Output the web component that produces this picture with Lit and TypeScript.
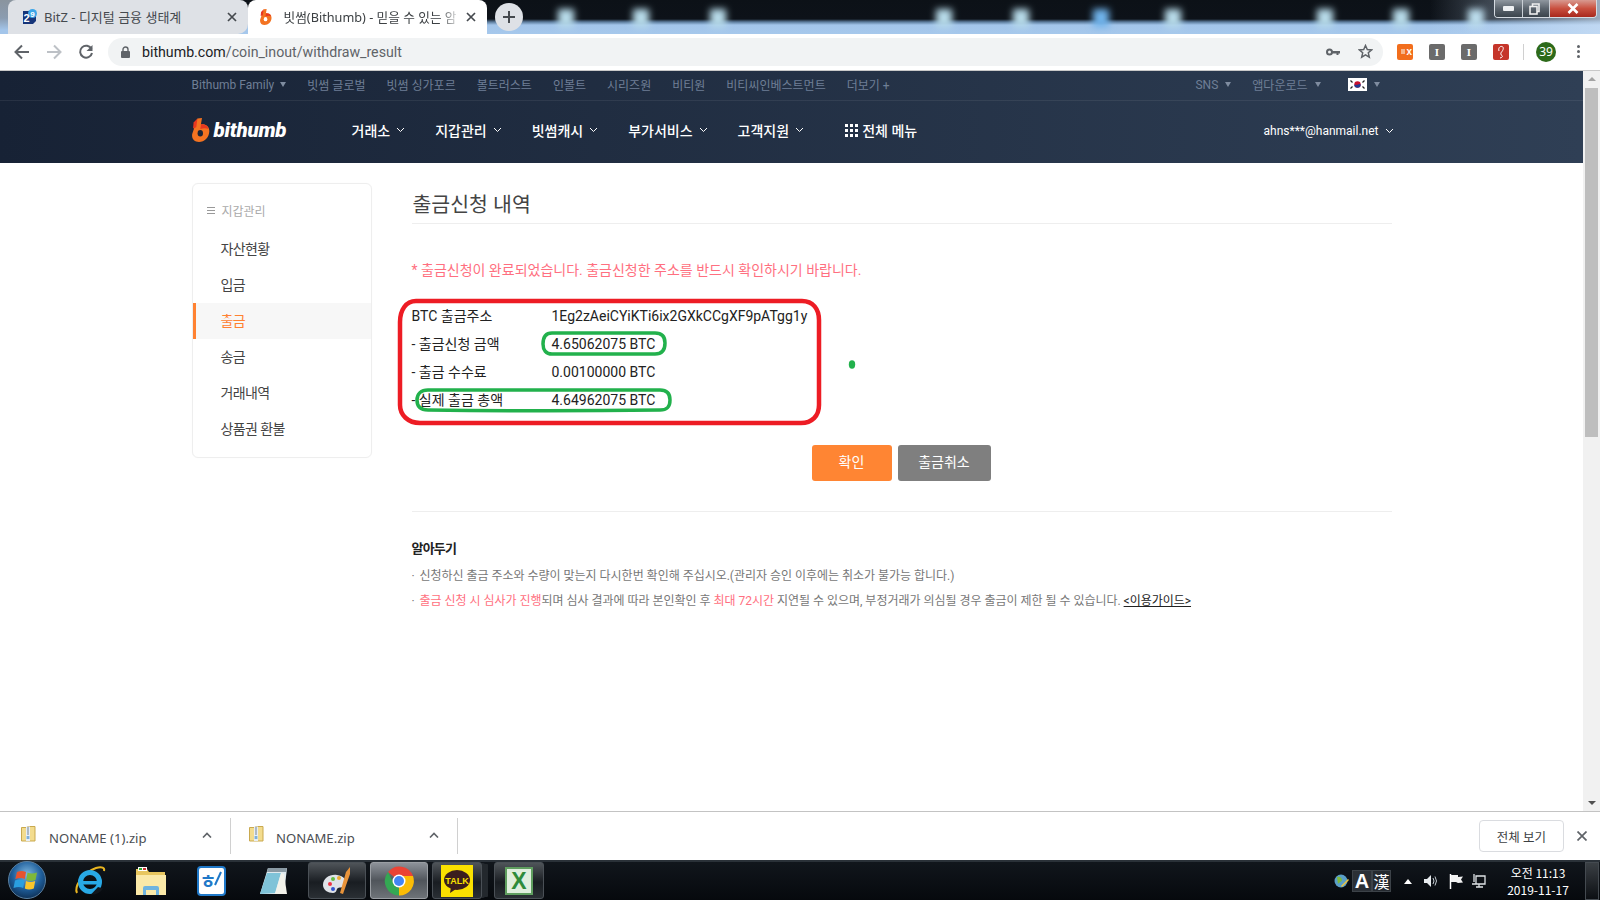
import { LitElement, html, svg, css } from "lit";
import { customElement } from "lit/decorators.js";

const chevron = html`<svg class="chev" width="9" height="6" viewBox="0 0 9 6"><path d="M1 1l3.5 3.5L8 1" fill="none" stroke="currentColor" stroke-width="1"/></svg>`;
const tri = html`<span class="tri"></span>`;

const flame = (w: number, h: number, hole: string) => html`<svg width=${w} height=${h} viewBox="0 0 18 24">
  <path d="M5.4 0.4 L10 0 L8.9 6.4 C13.5 5.8 17.6 8.2 17.3 13.6 C17 19.8 12.5 24 7 24 C2.4 24 -0.6 21 0.2 16 Z" fill="#f37321"/>
  <path d="M5.4 0.4L1.6 4.5 1 10.5 4.3 9.2Z" fill="#e8381f"/>
  <path d="M9 6.4C13 6 15.6 8 16.6 11 13.5 9.6 11 10.2 8.3 11Z" fill="#e8381f"/>
  <ellipse cx="8.3" cy="15.2" rx="2.7" ry="3.3" fill=${hole}/>
</svg>`;

const zipIcon = html`<svg class="zip" width="15" height="17" viewBox="0 0 15 17">
  <path d="M0.5 2.5h5l1-1h7.5v14.5h-13.5z" fill="#f3dc8e" stroke="#c9a94f"/>
  <path d="M5 1.5h4v14.5h-4z" fill="#e7eef5"/>
  <path d="M6.2 3h1.6M6.2 5h1.6M6.2 7h1.6M6.2 9h1.6" stroke="#5a6a7a"/>
  <rect x="5.6" y="11" width="2.8" height="3" fill="#7fb0d8"/>
</svg>`;

const upIcon = html`<svg class="up" width="10" height="6" viewBox="0 0 10 6"><path d="M1 5.500L5 1.500l4 4" fill="none" stroke="#5f6368" stroke-width="1.600"/></svg>`;

const topLinks = ["빗썸 글로벌", "빗썸 싱가포르", "볼트러스트", "인볼트", "시리즈원", "비티원", "비티씨인베스트먼트"];
const mainLinks = ["거래소", "지갑관리", "빗썸캐시", "부가서비스", "고객지원"];
const sideItems = ["자산현황", "입금", "출금", "송금", "거래내역", "상품권 환불"];
const rows = [
  ["BTC 출금주소", "1Eg2zAeiCYiKTi6ix2GXkCCgXF9pATgg1y"],
  ["- 출금신청 금액", "4.65062075 BTC"],
  ["- 출금 수수료", "0.00100000 BTC"],
  ["- 실제 출금 총액", "4.64962075 BTC"],
];
const spots = [566, 641, 718, 944, 1021, 1101, 1173, 1325, 1401, 1476];

@customElement("app-root")
export class AppRoot extends LitElement {
  static styles = css`
    :host { display: block; width: 1600px; height: 900px; position: relative; overflow: hidden; background: #fff; font-family: Roboto, "Noto Sans CJK KR", sans-serif; color: #222; }
    * { box-sizing: border-box; }
    .shell { display: flex; flex-direction: column; height: 900px; }
    a { color: inherit; text-decoration: none; }

    .titlebar { position: relative; height: 34px; flex: none; display: flex; align-items: flex-end; padding-left: 8px; overflow: hidden;
      background: linear-gradient(180deg, #0c1117 0, #0d1219 19px, #5d7d9e 22px, #a3c5ea 25px, #a6c8ec 34px); }
    .wall { position: absolute; inset: 0; }
    .leftfade { position: absolute; left: 0; top: 0; width: 70px; height: 34px; background: linear-gradient(180deg, #8a949e 0, #8b9cb0 18px, #a3c5ea 30px); }
    .rightfade { position: absolute; right: 0; top: 0; width: 170px; height: 34px; background: linear-gradient(90deg, transparent, #c9def5); opacity: .75; }
    .tab { position: relative; width: 239.5px; height: 34px; border-radius: 8px 8px 0 0; display: flex; align-items: center; font: 13px "Noto Sans", "Noto Sans CJK KR", sans-serif; color: #3c4043; padding: 0 0 1px 13px; }
    .tab.off { background: #dee1e6; color: #45494e; border-radius: 8px 8px 10px 0; }
    .tab.on { background: #fff; color: #3c4043; padding-left: 10px; font-size: 12.7px; }
    .tab .fav { width: 16px; height: 16px; flex: none; display: flex; justify-content: center; align-items: center; }
    .tab .tt { margin-left: 7px; white-space: nowrap; overflow: hidden; flex: none; }
    .tab.on .tt { margin-left: 10px; width: 177px; -webkit-mask-image: linear-gradient(90deg, #000 88%, transparent); mask-image: linear-gradient(90deg, #000 88%, transparent); }
    .tab .x { flex: none; width: 10px; height: 10px; margin-left: 5px; }
    .tab.off .tt { width: 150px; }
    .tab.off .x { margin-left: 33px; }
    .plus { position: relative; width: 28px; height: 28px; border-radius: 50%; background: #dee1e6; margin: 0 0 3px 8px; display: flex; align-items: center; justify-content: center; }
    .winbtns { position: absolute; right: 3px; top: 0; width: 103px; height: 18px; display: flex; border: 1px solid #d5dbe2; border-top: none; border-radius: 0 0 4px 4px; overflow: hidden; }
    .winbtns div { display: flex; align-items: center; justify-content: center; background: linear-gradient(180deg, #8f979f, #5b646d 50%, #3b444c); border-right: 1px solid #c9cfd5; }
    .winbtns .mn { width: 28px; } .winbtns .mx { width: 27px; padding-right: 3px; }
    .winbtns .cl { flex: 1; background: linear-gradient(180deg, #d89a90, #c9503f 50%, #a8281c); border-right: none; }

    .toolbar { height: 37px; flex: none; background: #fff; display: flex; align-items: center; border-bottom: 1px solid #c9c9c9; padding: 0 0 1px 14px; }
    .navico { width: 16px; height: 16px; flex: none; margin-right: 16px; display: block; }
    .omni { width: 1275px; margin-left: -2px; height: 28px; border-radius: 14px; background: #f1f3f4; display: flex; align-items: center; padding: 0 0 0 13px; font: 14.2px Roboto, sans-serif; color: #5f6368; }
    .omni b { font-weight: 400; color: #202124; }
    .url { margin-left: 12px; padding-top: 1px; }
    .omni .end { margin-left: auto; display: flex; align-items: center; gap: 18px; padding-right: 10px; }
    .exts { display: flex; align-items: center; margin-left: 14px; }
    .ext { width: 16px; height: 16px; border-radius: 2px; margin-right: 16px; display: flex; align-items: center; justify-content: center; color: #fff; font: 700 11px "Liberation Serif", serif; }
    .ext.o { background: #f26e1d; font: 700 10px "Liberation Sans", sans-serif; justify-content: flex-end; padding-right: 1px; gap: 1px; }
    .ext.o i { width: 4px; height: 5px; background: #f7b68a; display: block; }
    .ext.g { background: #6b6b6b; }
    .ext.r { background: #c5352a; }
    .sep { width: 1px; height: 16px; background: #d0d0d0; margin: 0 12px 0 -2px; }
    .avatar { width: 20px; height: 20px; border-radius: 50%; background: #2d6a1a; color: #fff; font: 12px "Noto Sans", sans-serif; display: flex; align-items: center; justify-content: center; }
    .dots { margin-left: 21px; display: flex; flex-direction: column; gap: 2px; }
    .dots i { width: 3px; height: 3px; border-radius: 50%; background: #5f6368; display: block; }

    .view { flex: 1; display: flex; min-height: 0; }
    .page { flex: 1; min-width: 0; }
    .wrap { width: 1200px; margin: 0 auto; }
    header { background: linear-gradient(90deg, #172235, #2f3f55); height: 92px; }
    .top { height: 30px; padding-bottom: 2px; border-bottom: 1px solid rgba(255,255,255,.07); color: #6f7f96; font-size: 12px; }
    .top .wrap, .mainnav .wrap { display: flex; align-items: center; height: 100%; }
    .top .links { display: flex; gap: 21px; align-items: center; }
    .top .fam { display: flex; align-items: center; gap: 6px; }
    .tri { display: inline-block; width: 0; height: 0; border: 3.5px solid transparent; border-top: 5px solid #7f8ca0; border-bottom: 0; }
    .top .right { margin-left: auto; display: flex; align-items: center; padding-right: 12px; }
    .top .right span.lbl { margin-right: 7px; }
    .top .right .s1 { margin-right: 21px; }
    .top .right .s2 { margin-right: 27px; }
    .flag { width: 19px; height: 13px; margin-right: 7px; display: block; }
    .mainnav { height: 62px; padding-bottom: 4px; color: #fff; font-size: 14px; font-weight: 500; }
    .logo { width: 160px; display: flex; align-items: center; gap: 4px; flex: none; }
    .logo span { font: italic 900 20.5px Roboto, sans-serif; letter-spacing: -0.2px; color: #fff; }
    .mlinks { display: flex; align-items: center; gap: 30px; }
    .mlinks a { display: flex; align-items: center; gap: 6px; }
    .chev { display: block; }
    .mlinks .all { gap: 4px; margin-left: 11px; }
    .grid9 { display: grid; grid-template-columns: repeat(3, 3px); gap: 2px; }
    .grid9 i { width: 3px; height: 3px; background: #fff; display: block; }
    .user { margin-left: auto; margin-right: -2px; padding-top: 2px; display: flex; align-items: center; gap: 6px; font-weight: 400; font-size: 12px; }

    .content { display: flex; gap: 40px; padding-top: 20px; }
    .side { width: 180px; height: 275px; flex: none; border: 1px solid #eee; border-radius: 6px; padding-top: 8px; box-shadow: 0 0 1px #f3f3f3; }
    .side .hd { height: 39px; padding-bottom: 3px; display: flex; align-items: center; gap: 7px; padding-left: 14px; font-size: 12px; color: #aaa; }
    .ham { width: 8px; height: 7px; border-top: 1px solid #999; border-bottom: 1px solid #999; position: relative; }
    .ham::after { content: ""; position: absolute; left: 0; right: 0; top: 2px; height: 1px; background: #999; }
    .side a { display: flex; align-items: center; height: 36px; padding: 0 0 2px 25px; font-size: 14px; letter-spacing: -0.6px; color: #444; border-left: 3px solid transparent; }
    .side a.on { background: #f7f7f7; color: #ff8232; border-left-color: #ff8232; }
    .main { width: 980px; flex: none; }
    h2 { margin: 0; height: 41px; padding: 8px 0 0 1px; line-height: 28px; font-size: 20.5px; font-weight: 400; color: #444; border-bottom: 1px solid #eee; }
    .msg { margin: 36px 0 0; font-size: 14px; line-height: 20px; color: #ff6f80; }
    .tbl { margin-top: 22px; display: grid; grid-template-columns: 140px auto; grid-auto-rows: 28px; align-items: center; font-size: 14px; color: #222; justify-content: start; }
    .tbl .k { margin-top: -2px; }
    .btns { margin-top: 31px; display: flex; justify-content: center; gap: 6px; padding-right: 1px; }
    .btn { height: 36px; border-radius: 3px; display: flex; align-items: center; justify-content: center; color: #fff; font-size: 14px; padding-bottom: 5px; }
    .btn.a { width: 80px; background: #ff8533; }
    .btn.b { width: 93px; background: #7f7f7f; }
    .rule { height: 1px; background: #eee; margin-top: 30px; }
    h3 { margin: 27px 0 5px; font-size: 13px; line-height: 20px; font-weight: 700; color: #222; letter-spacing: -0.8px; }
    .note { margin: 0; display: flex; font-size: 12px; line-height: 25px; color: #777; letter-spacing: -0.02px; }
    .note .dot { width: 8px; flex: none; }
    .note em { font-style: normal; color: #ff6f80; }
    .note u { color: #222; }

    .scroll { width: 17px; flex: none; background: #f1f1f1; display: flex; flex-direction: column; align-items: center; padding-top: 6px; }
    .sup { width: 0; height: 0; border: 4px solid transparent; border-bottom: 4px solid #a3a3a3; border-top: 0; }
    .thumb { width: 13px; height: 349px; background: #bebebe; margin-top: 7px; }
    .sdn { width: 0; height: 0; border: 4px solid transparent; border-top: 4px solid #505050; border-bottom: 0; margin-top: auto; margin-bottom: 6px; }

    .dl { height: 49px; flex: none; background: #fff; border-top: 1px solid #c3c3c3; display: flex; align-items: center; font: 13.1px "Noto Sans", "Noto Sans CJK KR", sans-serif; color: #4a4d52; }
    .dlitem { width: 227px; height: 36px; border-right: 1px solid #d0d0d0; display: flex; align-items: center; padding-left: 21px; position: relative; flex: none; }
    .dlitem.first { width: 231px; }
    .dlitem.second { padding-left: 18px; }
    .dlitem .zip { margin-top: -5px; flex: none; }
    .dlitem .nm { margin-left: 13px; flex: 1; padding-top: 3px; }
    .dlitem.second .nm { margin-left: 12px; }
    .dlitem .up { margin-right: 18px; margin-top: -3px; }
    .dlall { margin-left: auto; width: 85px; height: 32px; border: 1px solid #dadce0; border-radius: 4px; display: flex; align-items: center; justify-content: center; font-size: 12.5px; color: #3c4043; }
    .dlx { margin: 0 13px 0 13px; width: 10px; height: 10px; display: block; }

    .task { height: 40px; flex: none; background: linear-gradient(180deg, #11161c 0, #06090d 100%); border-top: 2px solid #2a3138; display: flex; align-items: stretch; position: relative; color: #fff; }
    .orb { width: 54px; display: flex; align-items: center; justify-content: center; margin-top: -2px; }
    .ti { width: 61px; display: flex; align-items: center; justify-content: center; flex: none; }
    .ti.firsti { margin-left: 5px; }
    .ti svg { overflow: visible; }
    .tb { flex: none; margin: 0 2px 1px; height: 37px; border: 1px solid #4a5056; border-radius: 3px; display: flex; align-items: center; justify-content: center; background: linear-gradient(180deg, #4f5459, #191d22 55%, #2a2f34); }
    .tb.act { background: linear-gradient(180deg, #8d9299, #50555b 50%, #6e7378); border-color: #9a9ea3; }
    .tb.w58 { width: 58px; } .tb.w50 { width: 50px; }
    .tb.paint { margin-left: 4.500px; }
    .tb.kakao { box-shadow: 4px 0 0 -1px #23282d, 8px 0 0 -2px #23282d; }
    .tb.excel { margin-left: 10px; }
    .tray { margin-left: auto; display: flex; align-items: center; font: 12px "Noto Sans CJK KR", "Noto Sans", sans-serif; }
    .ime { display: flex; height: 22px; margin-left: 2px; }
    .ime span { width: 19px; display: flex; align-items: center; justify-content: center; background: #24292f; border: 1px solid #3c4248; font-size: 16px; line-height: 1; }
    .ime .a { width: 20px; font: 700 20px "Liberation Sans", sans-serif; background: #2b3036; }
    .m13 { margin-left: 13px; } .m11 { margin-left: 11px; } .m7 { margin-left: 7px; }
    .clock { width: 90px; text-align: center; font: 12px/17px "Noto Sans CJK KR", sans-serif; margin-left: 7px; margin-right: 2px; }
    .desk { width: 14px; margin: 0 1px 0 0; height: 38px; border: 1px solid #444a50; background: linear-gradient(180deg, #3a3f44, #0c0f13); }
    .ann { position: absolute; left: 0; top: 0; width: 1600px; height: 900px; pointer-events: none; }
  `;

  render() {
    return html`<div class="shell">
      <div class="titlebar">
        <svg class="wall" width="1600" height="34" viewBox="0 0 1600 34">
          <defs><filter id="b" x="-150%" y="-60%" width="400%" height="220%"><feGaussianBlur stdDeviation="3.6"/></filter></defs>
          ${spots.map((x, i) => svg`<rect x=${x - 8} y="9" width="16" height="18" fill=${i === 5 ? "#6fb4ec" : "#b8dcea"} filter="url(#b)"></rect>`)}
        </svg>
        <div class="leftfade"></div>
        <div class="rightfade"></div>
        <div class="tab off">
          <span class="fav"><svg width="15" height="16" viewBox="0 0 15 16"><path d="M1 2h13v10l-3 3H1z" fill="#16357a"/><circle cx="10.5" cy="4.5" r="4.5" fill="#3ba5e8"/><text x="10.5" y="7.5" font-size="8" font-weight="700" text-anchor="middle" fill="#fff" font-family="Liberation Sans">9</text><text x="4.5" y="13" font-size="11" font-weight="700" text-anchor="middle" fill="#fff" font-family="Liberation Sans">2</text></svg></span>
          <span class="tt">BitZ - 디지털 금융 생태계</span>
          <svg class="x" viewBox="0 0 10 10"><path d="M1 1l8 8M9 1l-8 8" stroke="#45494e" stroke-width="1.7"/></svg>
        </div>
        <div class="tab on">
          <span class="fav">${flame(12, 16, "#fff")}</span>
          <span class="tt">빗썸(Bithumb) - 믿을 수 있는 암</span>
          <svg class="x" viewBox="0 0 10 10"><path d="M1 1l8 8M9 1l-8 8" stroke="#45494e" stroke-width="1.7"/></svg>
        </div>
        <div class="plus"><svg width="12" height="12" viewBox="0 0 12 12"><path d="M6 0v12M0 6h12" stroke="#45494e" stroke-width="2"/></svg></div>
        <div class="winbtns">
          <div class="mn"><svg width="11" height="5"><rect width="11" height="5" fill="#eef0f2" rx="1"/></svg></div>
          <div class="mx"><svg width="11" height="12" viewBox="0 0 11 12"><path d="M3.5 3V1h6.5v7.5h-2" fill="none" stroke="#eee" stroke-width="1.6"/><rect x="1" y="3.5" width="7" height="7.5" fill="none" stroke="#eee" stroke-width="1.6"/></svg></div>
          <div class="cl"><svg width="12" height="11" viewBox="0 0 12 11"><path d="M1.5 1l9 9M10.5 1l-9 9" stroke="#fff" stroke-width="2.6"/></svg></div>
        </div>
      </div>

      <div class="toolbar">
        <svg class="navico" viewBox="0 0 16 16"><path d="M15 8H2M8 1.5L1.5 8 8 14.500" fill="none" stroke="#5f6368" stroke-width="2"/></svg>
        <svg class="navico" viewBox="0 0 16 16"><path d="M1 8h13M8 1.500L14.500 8 8 14.500" fill="none" stroke="#bdc1c6" stroke-width="2"/></svg>
        <svg class="navico" viewBox="0 0 16 16"><path d="M13.500 5A6 6 0 1 0 14 9" fill="none" stroke="#5f6368" stroke-width="2"/><path d="M14.500 1v6h-6z" fill="#5f6368"/></svg>
        <div class="omni">
          <svg width="9" height="12" viewBox="0 0 9 12"><path d="M2 5V3.500a2.500 2.500 0 0 1 5 0V5" fill="none" stroke="#5f6368" stroke-width="1.400"/><rect y="5" width="9" height="7" rx="1" fill="#5f6368"/></svg>
          <span class="url"><b>bithumb.com</b>/coin_inout/withdraw_result</span>
          <span class="end">
            <svg width="14" height="8" viewBox="0 0 14 8"><circle cx="3.500" cy="4" r="2.500" fill="none" stroke="#5f6368" stroke-width="2"/><path d="M6 3h8v2.500h-1.500v1.500h-2v-1.500H6z" fill="#5f6368"/></svg>
            <svg width="15" height="15" viewBox="0 0 15 15"><path d="M7.500 1.500l1.800 4 4.300.4-3.300 2.900 1 4.300-3.800-2.300-3.800 2.300 1-4.300-3.300-2.900 4.300-.4z" fill="none" stroke="#5f6368" stroke-width="1.500"/></svg>
          </span>
        </div>
        <div class="exts">
          <span class="ext o"><i></i>x</span>
          <span class="ext g">I</span>
          <span class="ext g">I</span>
          <span class="ext r"><svg width="10" height="14" viewBox="0 0 10 14"><path d="M3 6C2 3 4 1 6 1.500 8 2 7.500 5 5.500 7 4.500 8 4.500 10 6 10.500 7 11 6.500 12.500 4 13" fill="none" stroke="#fff" stroke-width="1"/></svg></span>
          <span class="sep"></span>
          <span class="avatar">39</span>
          <span class="dots"><i></i><i></i><i></i></span>
        </div>
      </div>

      <div class="view">
        <div class="page">
          <header>
            <div class="top"><div class="wrap">
              <div class="links">
                <span class="fam">Bithumb Family ${tri}</span>
                ${topLinks.map((t) => html`<a>${t}</a>`)}
                <a>더보기 +</a>
              </div>
              <div class="right">
                <span class="lbl">SNS</span><span class="tri s1"></span>
                <span class="lbl">앱다운로드</span><span class="tri s2"></span>
                <svg class="flag" viewBox="0 0 19 13"><rect width="19" height="13" fill="#fff"/><circle cx="9.500" cy="6.500" r="3.200" fill="#c8102e"/><path d="M6.300 6.500a3.200 3.200 0 0 0 6.400 0c-1.600-1.500-3.200 1.500-6.400 0z" fill="#1f3a93"/><path d="M2.500 2.500l2 2M2.500 10.500l2-2M16.500 2.500l-2 2M16.500 10.500l-2-2" stroke="#222" stroke-width="1.200"/></svg>
                ${tri}
              </div>
            </div></div>
            <div class="mainnav"><div class="wrap">
              <div class="logo">${flame(18, 24, "#1a2538")}<span>bithumb</span></div>
              <div class="mlinks">
                ${mainLinks.map((t) => html`<a>${t} ${chevron}</a>`)}
                <a class="all"><span class="grid9">${Array(9).fill(0).map(() => html`<i></i>`)}</span>전체 메뉴</a>
              </div>
              <div class="user">ahns***@hanmail.net ${chevron}</div>
            </div></div>
          </header>
          <div class="wrap content">
            <nav class="side">
              <div class="hd"><span class="ham"></span>지갑관리</div>
              ${sideItems.map((t) => html`<a class=${t === "출금" ? "on" : ""}>${t}</a>`)}
            </nav>
            <section class="main">
              <h2>출금신청 내역</h2>
              <p class="msg">* 출금신청이 완료되었습니다. 출금신청한 주소를 반드시 확인하시기 바랍니다.</p>
              <div class="tbl">
                ${rows.map((r) => html`<span class="k">${r[0]}</span><span>${r[1]}</span>`)}
              </div>
              <div class="btns"><a class="btn a">확인</a><a class="btn b">출금취소</a></div>
              <div class="rule"></div>
              <h3>알아두기</h3>
              <p class="note"><span class="dot">·</span><span>신청하신 출금 주소와 수량이 맞는지 다시한번 확인해 주십시오.(관리자 승인 이후에는 취소가 불가능 합니다.)</span></p>
              <p class="note"><span class="dot">·</span><span><em>출금 신청 시 심사가 진행</em>되며 심사 결과에 따라 본인확인 후 <em>최대 72시간</em> 지연될 수 있으며, 부정거래가 의심될 경우 출금이 제한 될 수 있습니다. <u>&lt;이용가이드&gt;</u></span></p>
            </section>
          </div>
        </div>
        <div class="scroll"><span class="sup"></span><span class="thumb"></span><span class="sdn"></span></div>
      </div>

      <div class="dl">
        <div class="dlitem first">${zipIcon}<span class="nm">NONAME (1).zip</span>${upIcon}</div>
        <div class="dlitem second">${zipIcon}<span class="nm">NONAME.zip</span>${upIcon}</div>
        <a class="dlall">전체 보기</a>
        <svg class="dlx" viewBox="0 0 10 10"><path d="M.5.500l9 9M9.500.500l-9 9" stroke="#5f6368" stroke-width="1.700"/></svg>
      </div>

      <div class="task">
        <div class="orb"><svg width="38" height="38" viewBox="0 0 38 38">
          <defs><radialGradient id="o" cx=".5" cy=".35" r=".7"><stop offset="0" stop-color="#7fb8e0"/><stop offset=".55" stop-color="#1f5f9c"/><stop offset="1" stop-color="#0c2a4c"/></radialGradient></defs>
          <circle cx="19" cy="19" r="18.500" fill="url(#o)" stroke="#5a7f9f"/>
          <path d="M9 11q4.500-2 9 0l-1.200 7q-4-2-9.500 0z" fill="#e8532f"/><path d="M19.500 11.500q4 2 9.500 0l-1.500 7.500q-5 1.800-9.200 0z" fill="#7fb83a"/>
          <path d="M7 19.500q5-2 9.500 0l-1.300 7.500q-4-2-9.700 0z" fill="#2a9fe0"/><path d="M18 20q4 1.800 9.200 0l-1.400 7.500q-5 1.800-9 0z" fill="#f8c52c"/>
        </svg></div>
        <div class="ti firsti"><svg width="32" height="32" viewBox="0 0 32 32"><path d="M3 28C0 22 8 8 22 3c6-2 9 0 8 3" fill="none" stroke="#e9b520" stroke-width="2"/><circle cx="16" cy="17" r="9.500" fill="none" stroke="#28a9e6" stroke-width="5"/><path d="M8 16h17v3.500H8z" fill="#28a9e6"/><path d="M24 22l5 1.500q-4 6.500-12 6" fill="#11161c"/></svg></div>
        <div class="ti"><svg width="32" height="30" viewBox="0 0 32 30"><path d="M1 3h11l2 3h16v23H1z" fill="#e8c65f"/><path d="M3 1h9v4H3z" fill="#fff"/><rect x="4" y="2" width="3" height="2" fill="#3a3"/><rect x="8" y="2" width="3" height="2" fill="#c33"/><path d="M1 9h30v20H1z" fill="#fbe9a8"/><path d="M8 29v-7q0-2 2-2h12q2 0 2 2v7h-3v-5H11v5z" fill="#6fb4e0"/></svg></div>
        <div class="ti"><svg width="29" height="30" viewBox="0 0 29 30"><rect x="1" y="1" width="27" height="28" rx="3" fill="#fff" stroke="#1f78c8" stroke-width="2"/><text x="11" y="22" font-size="18" font-weight="700" text-anchor="middle" fill="#1f78c8" font-family="Noto Sans CJK KR">ㅎ</text><path d="M24 6l-6 13" stroke="#1f78c8" stroke-width="2"/></svg></div>
        <div class="ti"><svg width="30" height="30" viewBox="0 0 30 30"><path d="M10 2h19l-3 26H2z" fill="#dfe9ee"/><path d="M10 2h19l-1 4H9z" fill="#8a9aa4"/><path d="M9 7l-7 21 15-1 6-20z" fill="#7fc3d8"/><path d="M26 8l3 20H17l6-21z" fill="#f2f2ea"/></svg></div>
        <div class="tb w58 paint"><svg width="32" height="32" viewBox="0 0 32 32"><path d="M2 20c0-7 7-11 14-10 7 1 10 5 8 10-1 3-5 2-7 3s-1 5-5 5c-5 0-10-3-10-8z" fill="#dfe3e8"/><circle cx="9" cy="19" r="2" fill="#e34"/><circle cx="12" cy="14" r="2" fill="#6b4"/><circle cx="18" cy="13" r="2" fill="#ea3"/><circle cx="12" cy="24" r="2" fill="#35c"/><path d="M29 2l-4 5-6 21 3 1 7-20z" fill="#e8933a"/></svg></div>
        <div class="tb act w58"><svg width="30" height="30" viewBox="0 0 30 30"><path d="M15 15L4 6a14.500 14.500 0 0 1 25 4H15z" fill="#ea4335"/><path d="M15 29.500A14.500 14.500 0 0 0 29 10H15z" fill="#fbbc05"/><path d="M15 29.500A14.500 14.500 0 0 1 4 6l7 14 4 2z" fill="#34a853"/><circle cx="15" cy="15" r="6.500" fill="#fff"/><circle cx="15" cy="15" r="5" fill="#4285f4"/></svg></div>
        <div class="tb w50 kakao"><svg width="32" height="32" viewBox="0 0 32 32"><rect width="32" height="32" fill="#fae100"/><ellipse cx="16" cy="15" rx="13" ry="10" fill="#3b1e1e"/><path d="M10 22l-1 6 6-4z" fill="#3b1e1e"/><text x="16" y="18.500" font-family="Liberation Sans" font-weight="700" font-size="9" text-anchor="middle" fill="#fae100">TALK</text></svg></div>
        <div class="tb w50 excel"><svg width="28" height="28" viewBox="0 0 28 28"><rect x="1" y="1" width="26" height="26" fill="#dfeedd" stroke="#5f9e5f" stroke-width="2"/><text x="14" y="22" font-family="Liberation Sans" font-weight="700" font-size="23" text-anchor="middle" fill="#2e8b3a">X</text></svg></div>
        <div class="tray">
          <svg width="16" height="16" viewBox="0 0 16 16"><circle cx="7" cy="8" r="6.500" fill="#5a9fc8"/><path d="M3 4c3-1 5 1 5 3s-3 2-4 4z" fill="#7fb83a"/><path d="M15 7l-7 7-1-1 7-7z" fill="#f2c53a"/></svg>
          <div class="ime"><span class="a">A</span><span>漢</span></div>
          <svg class="m13" width="8" height="5" viewBox="0 0 8 5"><path d="M4 0l4 5H0z" fill="#fff"/></svg>
          <svg class="m11" width="15" height="14" viewBox="0 0 15 14"><path d="M1 5h3l4-4v12l-4-4H1z" fill="#e8ecef"/><path d="M10 4q2 3 0 6M12 2.500q3 4.500 0 9" fill="none" stroke="#c5ccd2"/></svg>
          <svg class="m11" width="15" height="15" viewBox="0 0 15 15"><path d="M1.500 0v15" stroke="#fff" stroke-width="1.500"/><path d="M2 1h7v2l5-.500-2 3 2 3-5 .500-2-1H2z" fill="#f2f2f2"/></svg>
          <svg class="m7" width="15" height="14" viewBox="0 0 15 14"><path d="M5 2h9v8H5zM1 10h9M5 13h7M8 10v3M3 0v8" fill="none" stroke="#dfe3e6" stroke-width="1.300"/></svg>
          <div class="clock">오전 11:13<br />2019-11-17</div>
          <div class="desk"></div>
        </div>
      </div>

      <svg class="ann" viewBox="0 0 1600 900">
        <path d="M416 301H802C813 301 819 309 819 320V405C819 416 812 423 801 423H420C408 423 400 415 400 405V322C400 310 406 301 416 301Z" fill="none" stroke="#ed1c24" stroke-width="4.500"/>
        <path d="M552 333H655C662 333 665 337 665 343 665 351 661 354 655 354H552C546 354 543 350 543 344 543 337 546 333 552 333Z" fill="none" stroke="#22b14c" stroke-width="3.500"/>
        <path d="M428 390H660C667 390 670 394 670 400 670 407 667 410 660 410 590 411 500 411 428 410 421 410 417 407 417 400 417 394 421 390 428 390Z" fill="none" stroke="#22b14c" stroke-width="3.500"/>
        <ellipse cx="852" cy="364.500" rx="3.200" ry="4.200" fill="#22b14c"/>
      </svg>
    </div>`;
  }
}
